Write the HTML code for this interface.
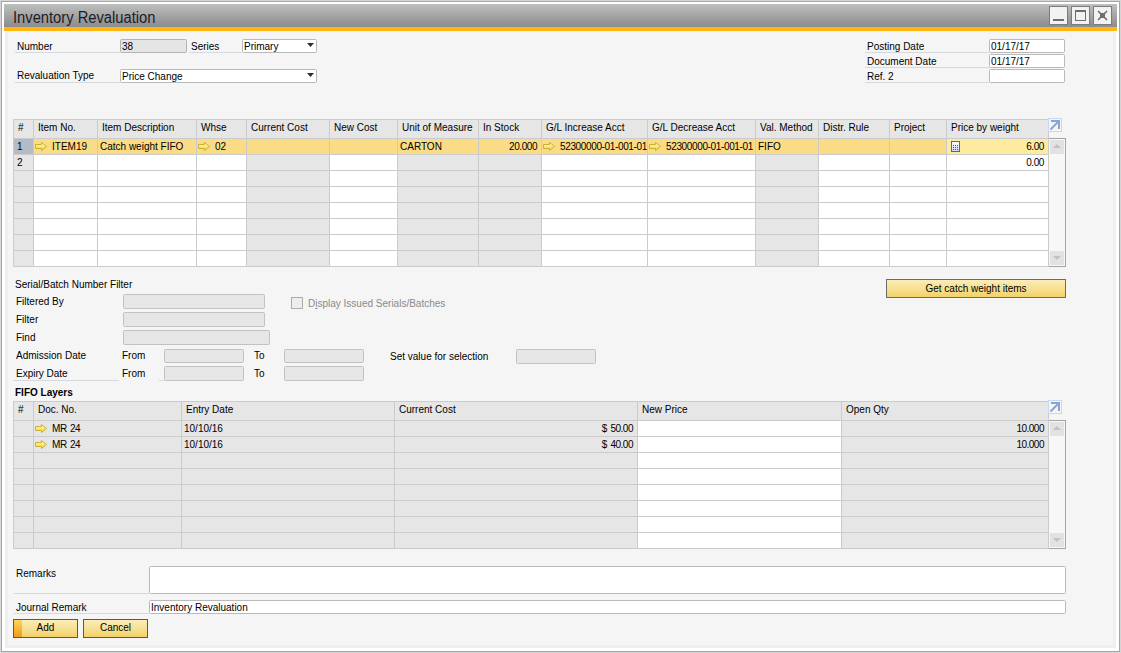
<!DOCTYPE html>
<html><head><meta charset="utf-8"><title>Inventory Revaluation</title><style>
*{box-sizing:border-box}
html,body{margin:0;padding:0}
body{width:1121px;height:653px;position:relative;overflow:hidden;background:#d6d6d6;font-family:"Liberation Sans",sans-serif;font-size:10px;color:#000}
.a{position:absolute}
.t{position:absolute;white-space:nowrap;line-height:12px;height:12px}
.g{color:#8a8a8a}
.b{font-weight:bold}
</style></head><body>
<div class="a" style="left:1px;top:1px;width:1119px;height:651px;border:1px solid #a6a6a6;background:#fff"></div>
<div class="a" style="left:4px;top:4px;width:1113px;height:23px;background:linear-gradient(#bebfbf,#8d8d8d 96%,#8a9099)"></div>
<div class="a" style="left:4px;top:27px;width:1113px;height:4px;background:#ffb70f"></div>
<div class="a" style="left:5px;top:31px;width:1111px;height:617px;background:#efefef"></div>
<div class="a" style="left:5px;top:31px;width:1111px;height:1px;background:#eef3f9"></div>
<div class="a" style="left:8px;top:32px;width:1105px;height:613px;background:#f5f5f5"></div>
<div class="t" style="left:13px;top:9px;font-size:16px;line-height:18px;height:18px;color:#1c1c28;transform:scaleX(0.92);transform-origin:0 0">Inventory Revaluation</div>
<div class="a" style="left:1049px;top:6px;width:19px;height:19px;border:1px solid #7c7c7c;background:#f2f2f2"></div>
<div class="a" style="left:1071px;top:6px;width:19px;height:19px;border:1px solid #7c7c7c;background:#f2f2f2"></div>
<div class="a" style="left:1093px;top:6px;width:19px;height:19px;border:1px solid #7c7c7c;background:#f2f2f2"></div>
<div class="a" style="left:1053px;top:19px;width:11px;height:2px;background:#6e6e6e"></div>
<div class="a" style="left:1075px;top:10px;width:11px;height:11px;border:1px solid #6e6e6e;border-top-width:2px"></div>
<svg class="a" style="left:1097px;top:10px" width="11" height="11" viewBox="0 0 11 11"><path d="M1.5 1.5L9.5 9.5M9.5 1.5L1.5 9.5" stroke="#6e6e6e" stroke-width="1.7" stroke-linecap="round"/><rect x="3" y="3" width="5" height="5" fill="#6e6e6e"/></svg>
<div class="t " style="left:17px;top:41px;">Number</div>
<div class="a" style="left:15px;top:52px;width:105px;height:1px;background:#d4d9df"></div>
<div class="a" style="left:120px;top:39px;width:67px;height:14px;background:#e5e5e5;border:1px solid #b4b4b4;border-radius:1.5px"></div>
<div class="t " style="left:122px;top:41px;">38</div>
<div class="t " style="left:191px;top:41px;">Series</div>
<div class="a" style="left:189px;top:52px;width:53px;height:1px;background:#d4d9df"></div>
<div class="a" style="left:242px;top:39px;width:75px;height:14px;background:#fff;border:1px solid #b9b9b9;border-radius:1.5px"></div>
<div class="t " style="left:244px;top:41px;">Primary</div>
<svg class="a" style="left:307px;top:43px" width="7" height="4" viewBox="0 0 7 4"><path d="M0 0H7L3.5 4Z" fill="#2e2e2e"/></svg>
<div class="t " style="left:17px;top:70px;">Revaluation Type</div>
<div class="a" style="left:15px;top:82px;width:105px;height:1px;background:#d4d9df"></div>
<div class="a" style="left:120px;top:69px;width:197px;height:14px;background:#fff;border:1px solid #b9b9b9;border-radius:1.5px"></div>
<div class="t " style="left:122px;top:71px;">Price Change</div>
<svg class="a" style="left:307px;top:73px" width="7" height="4" viewBox="0 0 7 4"><path d="M0 0H7L3.5 4Z" fill="#2e2e2e"/></svg>
<div class="t " style="left:867px;top:41px;">Posting Date</div>
<div class="a" style="left:865px;top:52px;width:124px;height:1px;background:#d4d9df"></div>
<div class="a" style="left:989px;top:39px;width:76px;height:14px;background:#fff;border:1px solid #b9b9b9;border-radius:1.5px"></div>
<div class="t " style="left:991px;top:41px;">01/17/17</div>
<div class="t " style="left:867px;top:56px;">Document Date</div>
<div class="a" style="left:865px;top:67px;width:124px;height:1px;background:#d4d9df"></div>
<div class="a" style="left:989px;top:54px;width:76px;height:14px;background:#fff;border:1px solid #b9b9b9;border-radius:1.5px"></div>
<div class="t " style="left:991px;top:56px;">01/17/17</div>
<div class="t " style="left:867px;top:71px;">Ref. 2</div>
<div class="a" style="left:865px;top:82px;width:124px;height:1px;background:#d4d9df"></div>
<div class="a" style="left:989px;top:69px;width:76px;height:14px;background:#fff;border:1px solid #b9b9b9;border-radius:1.5px"></div>
<div class="a" style="left:13px;top:119px;width:1036px;height:19px;background:#e6e6e6"></div>
<div class="a" style="left:14px;top:139px;width:19px;height:15px;background:#b2bbc6"></div>
<div class="a" style="left:34px;top:139px;width:63px;height:15px;background:#fbdc86"></div>
<div class="a" style="left:98px;top:139px;width:98px;height:15px;background:#fbdc86"></div>
<div class="a" style="left:197px;top:139px;width:49px;height:15px;background:#fbdc86"></div>
<div class="a" style="left:247px;top:139px;width:82px;height:15px;background:#fbdc86"></div>
<div class="a" style="left:330px;top:139px;width:67px;height:15px;background:#fbdc86"></div>
<div class="a" style="left:398px;top:139px;width:80px;height:15px;background:#fbdc86"></div>
<div class="a" style="left:479px;top:139px;width:62px;height:15px;background:#fbdc86"></div>
<div class="a" style="left:542px;top:139px;width:105px;height:15px;background:#fbdc86"></div>
<div class="a" style="left:648px;top:139px;width:107px;height:15px;background:#fbdc86"></div>
<div class="a" style="left:756px;top:139px;width:62px;height:15px;background:#fbdc86"></div>
<div class="a" style="left:819px;top:139px;width:70px;height:15px;background:#fbdc86"></div>
<div class="a" style="left:890px;top:139px;width:56px;height:15px;background:#fbdc86"></div>
<div class="a" style="left:947px;top:139px;width:101px;height:15px;background:#fdeb9f"></div>
<div class="a" style="left:14px;top:155px;width:19px;height:15px;background:#e6e6e6"></div>
<div class="a" style="left:34px;top:155px;width:63px;height:15px;background:#fff"></div>
<div class="a" style="left:98px;top:155px;width:98px;height:15px;background:#fff"></div>
<div class="a" style="left:197px;top:155px;width:49px;height:15px;background:#fff"></div>
<div class="a" style="left:247px;top:155px;width:82px;height:15px;background:#e6e6e6"></div>
<div class="a" style="left:330px;top:155px;width:67px;height:15px;background:#fff"></div>
<div class="a" style="left:398px;top:155px;width:80px;height:15px;background:#e6e6e6"></div>
<div class="a" style="left:479px;top:155px;width:62px;height:15px;background:#e6e6e6"></div>
<div class="a" style="left:542px;top:155px;width:105px;height:15px;background:#fff"></div>
<div class="a" style="left:648px;top:155px;width:107px;height:15px;background:#fff"></div>
<div class="a" style="left:756px;top:155px;width:62px;height:15px;background:#e6e6e6"></div>
<div class="a" style="left:819px;top:155px;width:70px;height:15px;background:#fff"></div>
<div class="a" style="left:890px;top:155px;width:56px;height:15px;background:#fff"></div>
<div class="a" style="left:947px;top:155px;width:101px;height:15px;background:#fff"></div>
<div class="a" style="left:14px;top:171px;width:19px;height:15px;background:#e6e6e6"></div>
<div class="a" style="left:34px;top:171px;width:63px;height:15px;background:#fff"></div>
<div class="a" style="left:98px;top:171px;width:98px;height:15px;background:#fff"></div>
<div class="a" style="left:197px;top:171px;width:49px;height:15px;background:#fff"></div>
<div class="a" style="left:247px;top:171px;width:82px;height:15px;background:#e6e6e6"></div>
<div class="a" style="left:330px;top:171px;width:67px;height:15px;background:#fff"></div>
<div class="a" style="left:398px;top:171px;width:80px;height:15px;background:#e6e6e6"></div>
<div class="a" style="left:479px;top:171px;width:62px;height:15px;background:#e6e6e6"></div>
<div class="a" style="left:542px;top:171px;width:105px;height:15px;background:#fff"></div>
<div class="a" style="left:648px;top:171px;width:107px;height:15px;background:#fff"></div>
<div class="a" style="left:756px;top:171px;width:62px;height:15px;background:#e6e6e6"></div>
<div class="a" style="left:819px;top:171px;width:70px;height:15px;background:#fff"></div>
<div class="a" style="left:890px;top:171px;width:56px;height:15px;background:#fff"></div>
<div class="a" style="left:947px;top:171px;width:101px;height:15px;background:#fff"></div>
<div class="a" style="left:14px;top:187px;width:19px;height:15px;background:#e6e6e6"></div>
<div class="a" style="left:34px;top:187px;width:63px;height:15px;background:#fff"></div>
<div class="a" style="left:98px;top:187px;width:98px;height:15px;background:#fff"></div>
<div class="a" style="left:197px;top:187px;width:49px;height:15px;background:#fff"></div>
<div class="a" style="left:247px;top:187px;width:82px;height:15px;background:#e6e6e6"></div>
<div class="a" style="left:330px;top:187px;width:67px;height:15px;background:#fff"></div>
<div class="a" style="left:398px;top:187px;width:80px;height:15px;background:#e6e6e6"></div>
<div class="a" style="left:479px;top:187px;width:62px;height:15px;background:#e6e6e6"></div>
<div class="a" style="left:542px;top:187px;width:105px;height:15px;background:#fff"></div>
<div class="a" style="left:648px;top:187px;width:107px;height:15px;background:#fff"></div>
<div class="a" style="left:756px;top:187px;width:62px;height:15px;background:#e6e6e6"></div>
<div class="a" style="left:819px;top:187px;width:70px;height:15px;background:#fff"></div>
<div class="a" style="left:890px;top:187px;width:56px;height:15px;background:#fff"></div>
<div class="a" style="left:947px;top:187px;width:101px;height:15px;background:#fff"></div>
<div class="a" style="left:14px;top:203px;width:19px;height:15px;background:#e6e6e6"></div>
<div class="a" style="left:34px;top:203px;width:63px;height:15px;background:#fff"></div>
<div class="a" style="left:98px;top:203px;width:98px;height:15px;background:#fff"></div>
<div class="a" style="left:197px;top:203px;width:49px;height:15px;background:#fff"></div>
<div class="a" style="left:247px;top:203px;width:82px;height:15px;background:#e6e6e6"></div>
<div class="a" style="left:330px;top:203px;width:67px;height:15px;background:#fff"></div>
<div class="a" style="left:398px;top:203px;width:80px;height:15px;background:#e6e6e6"></div>
<div class="a" style="left:479px;top:203px;width:62px;height:15px;background:#e6e6e6"></div>
<div class="a" style="left:542px;top:203px;width:105px;height:15px;background:#fff"></div>
<div class="a" style="left:648px;top:203px;width:107px;height:15px;background:#fff"></div>
<div class="a" style="left:756px;top:203px;width:62px;height:15px;background:#e6e6e6"></div>
<div class="a" style="left:819px;top:203px;width:70px;height:15px;background:#fff"></div>
<div class="a" style="left:890px;top:203px;width:56px;height:15px;background:#fff"></div>
<div class="a" style="left:947px;top:203px;width:101px;height:15px;background:#fff"></div>
<div class="a" style="left:14px;top:219px;width:19px;height:15px;background:#e6e6e6"></div>
<div class="a" style="left:34px;top:219px;width:63px;height:15px;background:#fff"></div>
<div class="a" style="left:98px;top:219px;width:98px;height:15px;background:#fff"></div>
<div class="a" style="left:197px;top:219px;width:49px;height:15px;background:#fff"></div>
<div class="a" style="left:247px;top:219px;width:82px;height:15px;background:#e6e6e6"></div>
<div class="a" style="left:330px;top:219px;width:67px;height:15px;background:#fff"></div>
<div class="a" style="left:398px;top:219px;width:80px;height:15px;background:#e6e6e6"></div>
<div class="a" style="left:479px;top:219px;width:62px;height:15px;background:#e6e6e6"></div>
<div class="a" style="left:542px;top:219px;width:105px;height:15px;background:#fff"></div>
<div class="a" style="left:648px;top:219px;width:107px;height:15px;background:#fff"></div>
<div class="a" style="left:756px;top:219px;width:62px;height:15px;background:#e6e6e6"></div>
<div class="a" style="left:819px;top:219px;width:70px;height:15px;background:#fff"></div>
<div class="a" style="left:890px;top:219px;width:56px;height:15px;background:#fff"></div>
<div class="a" style="left:947px;top:219px;width:101px;height:15px;background:#fff"></div>
<div class="a" style="left:14px;top:235px;width:19px;height:15px;background:#e6e6e6"></div>
<div class="a" style="left:34px;top:235px;width:63px;height:15px;background:#fff"></div>
<div class="a" style="left:98px;top:235px;width:98px;height:15px;background:#fff"></div>
<div class="a" style="left:197px;top:235px;width:49px;height:15px;background:#fff"></div>
<div class="a" style="left:247px;top:235px;width:82px;height:15px;background:#e6e6e6"></div>
<div class="a" style="left:330px;top:235px;width:67px;height:15px;background:#fff"></div>
<div class="a" style="left:398px;top:235px;width:80px;height:15px;background:#e6e6e6"></div>
<div class="a" style="left:479px;top:235px;width:62px;height:15px;background:#e6e6e6"></div>
<div class="a" style="left:542px;top:235px;width:105px;height:15px;background:#fff"></div>
<div class="a" style="left:648px;top:235px;width:107px;height:15px;background:#fff"></div>
<div class="a" style="left:756px;top:235px;width:62px;height:15px;background:#e6e6e6"></div>
<div class="a" style="left:819px;top:235px;width:70px;height:15px;background:#fff"></div>
<div class="a" style="left:890px;top:235px;width:56px;height:15px;background:#fff"></div>
<div class="a" style="left:947px;top:235px;width:101px;height:15px;background:#fff"></div>
<div class="a" style="left:14px;top:251px;width:19px;height:15px;background:#e6e6e6"></div>
<div class="a" style="left:34px;top:251px;width:63px;height:15px;background:#fff"></div>
<div class="a" style="left:98px;top:251px;width:98px;height:15px;background:#fff"></div>
<div class="a" style="left:197px;top:251px;width:49px;height:15px;background:#fff"></div>
<div class="a" style="left:247px;top:251px;width:82px;height:15px;background:#e6e6e6"></div>
<div class="a" style="left:330px;top:251px;width:67px;height:15px;background:#fff"></div>
<div class="a" style="left:398px;top:251px;width:80px;height:15px;background:#e6e6e6"></div>
<div class="a" style="left:479px;top:251px;width:62px;height:15px;background:#e6e6e6"></div>
<div class="a" style="left:542px;top:251px;width:105px;height:15px;background:#fff"></div>
<div class="a" style="left:648px;top:251px;width:107px;height:15px;background:#fff"></div>
<div class="a" style="left:756px;top:251px;width:62px;height:15px;background:#e6e6e6"></div>
<div class="a" style="left:819px;top:251px;width:70px;height:15px;background:#fff"></div>
<div class="a" style="left:890px;top:251px;width:56px;height:15px;background:#fff"></div>
<div class="a" style="left:947px;top:251px;width:101px;height:15px;background:#fff"></div>
<div class="a" style="left:13px;top:119px;width:1036px;height:1px;background:#cbcbcb"></div>
<div class="a" style="left:13px;top:138px;width:1036px;height:1px;background:#cbcbcb"></div>
<div class="a" style="left:13px;top:154px;width:1036px;height:1px;background:#cbcbcb"></div>
<div class="a" style="left:13px;top:170px;width:1036px;height:1px;background:#cbcbcb"></div>
<div class="a" style="left:13px;top:186px;width:1036px;height:1px;background:#cbcbcb"></div>
<div class="a" style="left:13px;top:202px;width:1036px;height:1px;background:#cbcbcb"></div>
<div class="a" style="left:13px;top:218px;width:1036px;height:1px;background:#cbcbcb"></div>
<div class="a" style="left:13px;top:234px;width:1036px;height:1px;background:#cbcbcb"></div>
<div class="a" style="left:13px;top:250px;width:1036px;height:1px;background:#cbcbcb"></div>
<div class="a" style="left:13px;top:266px;width:1036px;height:1px;background:#cbcbcb"></div>
<div class="a" style="left:13px;top:119px;width:1px;height:148px;background:#cbcbcb"></div>
<div class="a" style="left:33px;top:119px;width:1px;height:148px;background:#cbcbcb"></div>
<div class="a" style="left:97px;top:119px;width:1px;height:148px;background:#cbcbcb"></div>
<div class="a" style="left:196px;top:119px;width:1px;height:148px;background:#cbcbcb"></div>
<div class="a" style="left:246px;top:119px;width:1px;height:148px;background:#cbcbcb"></div>
<div class="a" style="left:329px;top:119px;width:1px;height:148px;background:#cbcbcb"></div>
<div class="a" style="left:397px;top:119px;width:1px;height:148px;background:#cbcbcb"></div>
<div class="a" style="left:478px;top:119px;width:1px;height:148px;background:#cbcbcb"></div>
<div class="a" style="left:541px;top:119px;width:1px;height:148px;background:#cbcbcb"></div>
<div class="a" style="left:647px;top:119px;width:1px;height:148px;background:#cbcbcb"></div>
<div class="a" style="left:755px;top:119px;width:1px;height:148px;background:#cbcbcb"></div>
<div class="a" style="left:818px;top:119px;width:1px;height:148px;background:#cbcbcb"></div>
<div class="a" style="left:889px;top:119px;width:1px;height:148px;background:#cbcbcb"></div>
<div class="a" style="left:946px;top:119px;width:1px;height:148px;background:#cbcbcb"></div>
<div class="a" style="left:1048px;top:119px;width:1px;height:148px;background:#cbcbcb"></div>
<div class="t " style="left:18px;top:122px;">#</div>
<div class="t " style="left:38px;top:122px;">Item No.</div>
<div class="t " style="left:102px;top:122px;">Item Description</div>
<div class="t " style="left:201px;top:122px;">Whse</div>
<div class="t " style="left:251px;top:122px;">Current Cost</div>
<div class="t " style="left:334px;top:122px;">New Cost</div>
<div class="t " style="left:402px;top:122px;">Unit of Measure</div>
<div class="t " style="left:483px;top:122px;">In Stock</div>
<div class="t " style="left:546px;top:122px;">G/L Increase Acct</div>
<div class="t " style="left:652px;top:122px;">G/L Decrease Acct</div>
<div class="t " style="left:760px;top:122px;">Val. Method</div>
<div class="t " style="left:823px;top:122px;">Distr. Rule</div>
<div class="t " style="left:894px;top:122px;">Project</div>
<div class="t " style="left:951px;top:122px;">Price by weight</div>
<div class="t " style="left:17px;top:141px;">1</div>
<div class="t " style="left:17px;top:157px;">2</div>
<svg class="a" style="left:35px;top:142px" width="12" height="9" viewBox="0 0 12 9"><defs><linearGradient id="ag1" x1="0" y1="0" x2="0" y2="1"><stop offset="0" stop-color="#fffce8"/><stop offset="0.5" stop-color="#fbe878"/><stop offset="1" stop-color="#f5d020"/></linearGradient></defs><path d="M0.5 2.5H6.5V0.5L11.5 4.5L6.5 8.5V6.5H0.5Z" fill="url(#ag1)" stroke="#c8b03a" stroke-width="1" stroke-linejoin="miter"/></svg>
<div class="t " style="left:52px;top:141px;">ITEM19</div>
<div class="t " style="left:100px;top:141px;">Catch weight FIFO</div>
<svg class="a" style="left:198px;top:142px" width="12" height="9" viewBox="0 0 12 9"><defs><linearGradient id="ag2" x1="0" y1="0" x2="0" y2="1"><stop offset="0" stop-color="#fffce8"/><stop offset="0.5" stop-color="#fbe878"/><stop offset="1" stop-color="#f5d020"/></linearGradient></defs><path d="M0.5 2.5H6.5V0.5L11.5 4.5L6.5 8.5V6.5H0.5Z" fill="url(#ag2)" stroke="#c8b03a" stroke-width="1" stroke-linejoin="miter"/></svg>
<div class="t " style="left:215px;top:141px;">02</div>
<div class="t " style="left:400px;top:141px;">CARTON</div>
<div class="t" style="right:584px;top:141px;letter-spacing:-0.45px">20.000</div>
<svg class="a" style="left:543px;top:142px" width="12" height="9" viewBox="0 0 12 9"><defs><linearGradient id="ag3" x1="0" y1="0" x2="0" y2="1"><stop offset="0" stop-color="#fffce8"/><stop offset="0.5" stop-color="#fbe878"/><stop offset="1" stop-color="#f5d020"/></linearGradient></defs><path d="M0.5 2.5H6.5V0.5L11.5 4.5L6.5 8.5V6.5H0.5Z" fill="url(#ag3)" stroke="#c8b03a" stroke-width="1" stroke-linejoin="miter"/></svg>
<div class="t " style="left:560px;top:141px;letter-spacing:-0.36px">52300000-01-001-01</div>
<svg class="a" style="left:649px;top:142px" width="12" height="9" viewBox="0 0 12 9"><defs><linearGradient id="ag4" x1="0" y1="0" x2="0" y2="1"><stop offset="0" stop-color="#fffce8"/><stop offset="0.5" stop-color="#fbe878"/><stop offset="1" stop-color="#f5d020"/></linearGradient></defs><path d="M0.5 2.5H6.5V0.5L11.5 4.5L6.5 8.5V6.5H0.5Z" fill="url(#ag4)" stroke="#c8b03a" stroke-width="1" stroke-linejoin="miter"/></svg>
<div class="t " style="left:666px;top:141px;letter-spacing:-0.36px">52300000-01-001-01</div>
<div class="t " style="left:758px;top:141px;">FIFO</div>
<svg class="a" style="left:951px;top:141px" width="9" height="11" viewBox="0 0 9 11"><defs><linearGradient id="cg" x1="0" y1="0" x2="0" y2="1"><stop offset="0" stop-color="#ffffff"/><stop offset="1" stop-color="#c9d9f0"/></linearGradient></defs><rect x="0.5" y="0.5" width="8" height="10" fill="url(#cg)" stroke="#3d6ab2"/><g fill="#2c5aa8"><rect x="2" y="4" width="1" height="1"/><rect x="4" y="4" width="1" height="1"/><rect x="6" y="4" width="1" height="1"/><rect x="2" y="6" width="1" height="1"/><rect x="4" y="6" width="1" height="1"/><rect x="6" y="6" width="1" height="1"/><rect x="2" y="8" width="1" height="1"/><rect x="4" y="8" width="1" height="1"/><rect x="6" y="8" width="1" height="1"/></g></svg>
<div class="t" style="right:77px;top:141px;letter-spacing:-0.4px">6.00</div>
<div class="t" style="right:77px;top:157px;letter-spacing:-0.4px">0.00</div>
<div class="a" style="left:1049px;top:138px;width:17px;height:129px;background:#f7f7f7;border:1px solid #a4a4a4;border-left:none"></div>
<div class="a" style="left:1050px;top:140px;width:14px;height:14px;background:#e2e2e2"></div>
<svg class="a" style="left:1053px;top:144px" width="8" height="4" viewBox="0 0 8 4"><path d="M0 4L4 0L8 4Z" fill="#c2c2c2"/></svg>
<div class="a" style="left:1050px;top:251px;width:14px;height:14px;background:#e2e2e2"></div>
<svg class="a" style="left:1053px;top:256px" width="8" height="4" viewBox="0 0 8 4"><path d="M0 0L8 0L4 4Z" fill="#c2c2c2"/></svg>
<svg class="a" style="left:1048px;top:118px" width="14" height="14" viewBox="0 0 14 14"><rect x="0.5" y="0.5" width="13" height="13" fill="none" stroke="#c6d9f0"/><path d="M2.5 11.5L10.5 3.5" fill="none" stroke="#86a5d2" stroke-width="2"/><path d="M3 2H12V11H10V4H3Z" fill="#86a5d2"/></svg>
<div class="t " style="left:15px;top:279px;">Serial/Batch Number Filter</div>
<div class="t " style="left:16px;top:296px;">Filtered By</div>
<div class="a" style="left:123px;top:294px;width:142px;height:15px;background:#e6e6e6;border:1px solid #c2c2c2;border-radius:1.5px"></div>
<div class="t " style="left:16px;top:314px;">Filter</div>
<div class="a" style="left:123px;top:312px;width:142px;height:15px;background:#e6e6e6;border:1px solid #c2c2c2;border-radius:1.5px"></div>
<div class="t " style="left:16px;top:332px;">Find</div>
<div class="a" style="left:123px;top:330px;width:147px;height:15px;background:#e6e6e6;border:1px solid #c2c2c2;border-radius:1.5px"></div>
<div class="a" style="left:291px;top:297px;width:12px;height:12px;background:#ededed;border:1px solid #adadad"></div>
<div class="t g" style="left:308px;top:298px;">D<u>i</u>splay Issued Serials/Batches</div>
<div class="t " style="left:16px;top:350px;">Admission Date</div>
<div class="t " style="left:122px;top:350px;">From</div>
<div class="a" style="left:164px;top:349px;width:80px;height:14px;background:#e6e6e6;border:1px solid #c2c2c2;border-radius:1.5px"></div>
<div class="t " style="left:254px;top:350px;">To</div>
<div class="a" style="left:284px;top:349px;width:80px;height:14px;background:#e6e6e6;border:1px solid #c2c2c2;border-radius:1.5px"></div>
<div class="t " style="left:390px;top:351px;">Set value for selection</div>
<div class="a" style="left:516px;top:349px;width:80px;height:15px;background:#e6e6e6;border:1px solid #c2c2c2;border-radius:1.5px"></div>
<div class="t " style="left:16px;top:368px;">Expiry Date</div>
<div class="a" style="left:13px;top:380px;width:106px;height:1px;background:#d4d9df"></div>
<div class="t " style="left:122px;top:368px;">From</div>
<div class="a" style="left:159px;top:380px;width:5px;height:1px;background:#d4d9df"></div>
<div class="a" style="left:164px;top:366px;width:80px;height:15px;background:#e6e6e6;border:1px solid #c2c2c2;border-radius:1.5px"></div>
<div class="t " style="left:254px;top:368px;">To</div>
<div class="a" style="left:284px;top:366px;width:80px;height:15px;background:#e6e6e6;border:1px solid #c2c2c2;border-radius:1.5px"></div>
<div class="t b" style="left:15px;top:387px;">FIFO Layers</div>
<div class="a" style="left:886px;top:279px;width:180px;height:19px;border:1px solid #6b6b6b;background:linear-gradient(#fcecb8,#f7df8e 55%,#f3d16a)"></div>
<div class="t" style="left:887px;top:283px;width:178px;text-align:center">Get catch weight items</div>
<div class="a" style="left:13px;top:401px;width:1036px;height:19px;background:#e6e6e6"></div>
<div class="a" style="left:14px;top:421px;width:19px;height:15px;background:#e6e6e6"></div>
<div class="a" style="left:34px;top:421px;width:147px;height:15px;background:#e6e6e6"></div>
<div class="a" style="left:182px;top:421px;width:212px;height:15px;background:#e6e6e6"></div>
<div class="a" style="left:395px;top:421px;width:242px;height:15px;background:#e6e6e6"></div>
<div class="a" style="left:638px;top:421px;width:203px;height:15px;background:#fff"></div>
<div class="a" style="left:842px;top:421px;width:206px;height:15px;background:#e6e6e6"></div>
<div class="a" style="left:14px;top:437px;width:19px;height:15px;background:#e6e6e6"></div>
<div class="a" style="left:34px;top:437px;width:147px;height:15px;background:#e6e6e6"></div>
<div class="a" style="left:182px;top:437px;width:212px;height:15px;background:#e6e6e6"></div>
<div class="a" style="left:395px;top:437px;width:242px;height:15px;background:#e6e6e6"></div>
<div class="a" style="left:638px;top:437px;width:203px;height:15px;background:#fff"></div>
<div class="a" style="left:842px;top:437px;width:206px;height:15px;background:#e6e6e6"></div>
<div class="a" style="left:14px;top:453px;width:19px;height:15px;background:#e6e6e6"></div>
<div class="a" style="left:34px;top:453px;width:147px;height:15px;background:#e6e6e6"></div>
<div class="a" style="left:182px;top:453px;width:212px;height:15px;background:#e6e6e6"></div>
<div class="a" style="left:395px;top:453px;width:242px;height:15px;background:#e6e6e6"></div>
<div class="a" style="left:638px;top:453px;width:203px;height:15px;background:#fff"></div>
<div class="a" style="left:842px;top:453px;width:206px;height:15px;background:#e6e6e6"></div>
<div class="a" style="left:14px;top:469px;width:19px;height:15px;background:#e6e6e6"></div>
<div class="a" style="left:34px;top:469px;width:147px;height:15px;background:#e6e6e6"></div>
<div class="a" style="left:182px;top:469px;width:212px;height:15px;background:#e6e6e6"></div>
<div class="a" style="left:395px;top:469px;width:242px;height:15px;background:#e6e6e6"></div>
<div class="a" style="left:638px;top:469px;width:203px;height:15px;background:#fff"></div>
<div class="a" style="left:842px;top:469px;width:206px;height:15px;background:#e6e6e6"></div>
<div class="a" style="left:14px;top:485px;width:19px;height:15px;background:#e6e6e6"></div>
<div class="a" style="left:34px;top:485px;width:147px;height:15px;background:#e6e6e6"></div>
<div class="a" style="left:182px;top:485px;width:212px;height:15px;background:#e6e6e6"></div>
<div class="a" style="left:395px;top:485px;width:242px;height:15px;background:#e6e6e6"></div>
<div class="a" style="left:638px;top:485px;width:203px;height:15px;background:#fff"></div>
<div class="a" style="left:842px;top:485px;width:206px;height:15px;background:#e6e6e6"></div>
<div class="a" style="left:14px;top:501px;width:19px;height:15px;background:#e6e6e6"></div>
<div class="a" style="left:34px;top:501px;width:147px;height:15px;background:#e6e6e6"></div>
<div class="a" style="left:182px;top:501px;width:212px;height:15px;background:#e6e6e6"></div>
<div class="a" style="left:395px;top:501px;width:242px;height:15px;background:#e6e6e6"></div>
<div class="a" style="left:638px;top:501px;width:203px;height:15px;background:#fff"></div>
<div class="a" style="left:842px;top:501px;width:206px;height:15px;background:#e6e6e6"></div>
<div class="a" style="left:14px;top:517px;width:19px;height:15px;background:#e6e6e6"></div>
<div class="a" style="left:34px;top:517px;width:147px;height:15px;background:#e6e6e6"></div>
<div class="a" style="left:182px;top:517px;width:212px;height:15px;background:#e6e6e6"></div>
<div class="a" style="left:395px;top:517px;width:242px;height:15px;background:#e6e6e6"></div>
<div class="a" style="left:638px;top:517px;width:203px;height:15px;background:#fff"></div>
<div class="a" style="left:842px;top:517px;width:206px;height:15px;background:#e6e6e6"></div>
<div class="a" style="left:14px;top:533px;width:19px;height:15px;background:#e6e6e6"></div>
<div class="a" style="left:34px;top:533px;width:147px;height:15px;background:#e6e6e6"></div>
<div class="a" style="left:182px;top:533px;width:212px;height:15px;background:#e6e6e6"></div>
<div class="a" style="left:395px;top:533px;width:242px;height:15px;background:#e6e6e6"></div>
<div class="a" style="left:638px;top:533px;width:203px;height:15px;background:#fff"></div>
<div class="a" style="left:842px;top:533px;width:206px;height:15px;background:#e6e6e6"></div>
<div class="a" style="left:13px;top:401px;width:1036px;height:1px;background:#cbcbcb"></div>
<div class="a" style="left:13px;top:420px;width:1036px;height:1px;background:#cbcbcb"></div>
<div class="a" style="left:13px;top:436px;width:1036px;height:1px;background:#cbcbcb"></div>
<div class="a" style="left:13px;top:452px;width:1036px;height:1px;background:#cbcbcb"></div>
<div class="a" style="left:13px;top:468px;width:1036px;height:1px;background:#cbcbcb"></div>
<div class="a" style="left:13px;top:484px;width:1036px;height:1px;background:#cbcbcb"></div>
<div class="a" style="left:13px;top:500px;width:1036px;height:1px;background:#cbcbcb"></div>
<div class="a" style="left:13px;top:516px;width:1036px;height:1px;background:#cbcbcb"></div>
<div class="a" style="left:13px;top:532px;width:1036px;height:1px;background:#cbcbcb"></div>
<div class="a" style="left:13px;top:548px;width:1036px;height:1px;background:#cbcbcb"></div>
<div class="a" style="left:13px;top:401px;width:1px;height:148px;background:#cbcbcb"></div>
<div class="a" style="left:33px;top:401px;width:1px;height:148px;background:#cbcbcb"></div>
<div class="a" style="left:181px;top:401px;width:1px;height:148px;background:#cbcbcb"></div>
<div class="a" style="left:394px;top:401px;width:1px;height:148px;background:#cbcbcb"></div>
<div class="a" style="left:637px;top:401px;width:1px;height:148px;background:#cbcbcb"></div>
<div class="a" style="left:841px;top:401px;width:1px;height:148px;background:#cbcbcb"></div>
<div class="a" style="left:1048px;top:401px;width:1px;height:148px;background:#cbcbcb"></div>
<div class="t " style="left:18px;top:404px;">#</div>
<div class="t " style="left:38px;top:404px;">Doc. No.</div>
<div class="t " style="left:186px;top:404px;">Entry Date</div>
<div class="t " style="left:399px;top:404px;">Current Cost</div>
<div class="t " style="left:642px;top:404px;">New Price</div>
<div class="t " style="left:846px;top:404px;">Open Qty</div>
<svg class="a" style="left:35px;top:424px" width="12" height="9" viewBox="0 0 12 9"><defs><linearGradient id="ag5" x1="0" y1="0" x2="0" y2="1"><stop offset="0" stop-color="#fffce8"/><stop offset="0.5" stop-color="#fbe878"/><stop offset="1" stop-color="#f5d020"/></linearGradient></defs><path d="M0.5 2.5H6.5V0.5L11.5 4.5L6.5 8.5V6.5H0.5Z" fill="url(#ag5)" stroke="#c8b03a" stroke-width="1" stroke-linejoin="miter"/></svg>
<div class="t " style="left:52px;top:423px;letter-spacing:-0.45px;word-spacing:1px">MR 24</div>
<div class="t " style="left:184px;top:423px;">10/10/16</div>
<div class="t" style="right:488px;top:423px;letter-spacing:-0.5px;word-spacing:1.5px">$ 50.00</div>
<div class="t" style="right:77px;top:423px;letter-spacing:-0.5px">10.000</div>
<svg class="a" style="left:35px;top:440px" width="12" height="9" viewBox="0 0 12 9"><defs><linearGradient id="ag6" x1="0" y1="0" x2="0" y2="1"><stop offset="0" stop-color="#fffce8"/><stop offset="0.5" stop-color="#fbe878"/><stop offset="1" stop-color="#f5d020"/></linearGradient></defs><path d="M0.5 2.5H6.5V0.5L11.5 4.5L6.5 8.5V6.5H0.5Z" fill="url(#ag6)" stroke="#c8b03a" stroke-width="1" stroke-linejoin="miter"/></svg>
<div class="t " style="left:52px;top:439px;letter-spacing:-0.45px;word-spacing:1px">MR 24</div>
<div class="t " style="left:184px;top:439px;">10/10/16</div>
<div class="t" style="right:488px;top:439px;letter-spacing:-0.5px;word-spacing:1.5px">$ 40.00</div>
<div class="t" style="right:77px;top:439px;letter-spacing:-0.5px">10.000</div>
<div class="a" style="left:1049px;top:420px;width:17px;height:129px;background:#f7f7f7;border:1px solid #a4a4a4;border-left:none"></div>
<div class="a" style="left:1050px;top:422px;width:14px;height:14px;background:#e2e2e2"></div>
<svg class="a" style="left:1053px;top:426px" width="8" height="4" viewBox="0 0 8 4"><path d="M0 4L4 0L8 4Z" fill="#c2c2c2"/></svg>
<div class="a" style="left:1050px;top:533px;width:14px;height:14px;background:#e2e2e2"></div>
<svg class="a" style="left:1053px;top:538px" width="8" height="4" viewBox="0 0 8 4"><path d="M0 0L8 0L4 4Z" fill="#c2c2c2"/></svg>
<svg class="a" style="left:1048px;top:400px" width="14" height="14" viewBox="0 0 14 14"><rect x="0.5" y="0.5" width="13" height="13" fill="none" stroke="#c6d9f0"/><path d="M2.5 11.5L10.5 3.5" fill="none" stroke="#86a5d2" stroke-width="2"/><path d="M3 2H12V11H10V4H3Z" fill="#86a5d2"/></svg>
<div class="t " style="left:16px;top:568px;">Remarks</div>
<div class="a" style="left:14px;top:593px;width:135px;height:1px;background:#d4d9df"></div>
<div class="a" style="left:149px;top:566px;width:917px;height:28px;background:#fff;border:1px solid #b9b9b9;border-radius:1.5px"></div>
<div class="t " style="left:16px;top:602px;">Journal Remark</div>
<div class="a" style="left:14px;top:613px;width:135px;height:1px;background:#d4d9df"></div>
<div class="a" style="left:149px;top:600px;width:917px;height:14px;background:#fff;border:1px solid #b9b9b9;border-radius:1.5px"></div>
<div class="t " style="left:151px;top:602px;">Inventory Revaluation</div>
<div class="a" style="left:13px;top:619px;width:65px;height:19px;border:1px solid #585858;background:linear-gradient(#fcecb8,#f7df8e 55%,#f3d16a)"></div>
<div class="a" style="left:14px;top:620px;width:8px;height:17px;background:linear-gradient(#fcd55a,#f29a1a)"></div>
<div class="t" style="left:13px;top:622px;width:65px;text-align:center">Add</div>
<div class="a" style="left:83px;top:619px;width:65px;height:19px;border:1px solid #585858;background:linear-gradient(#fcecb8,#f7df8e 55%,#f3d16a)"></div>
<div class="t" style="left:83px;top:622px;width:65px;text-align:center">Cancel</div>
</body></html>
